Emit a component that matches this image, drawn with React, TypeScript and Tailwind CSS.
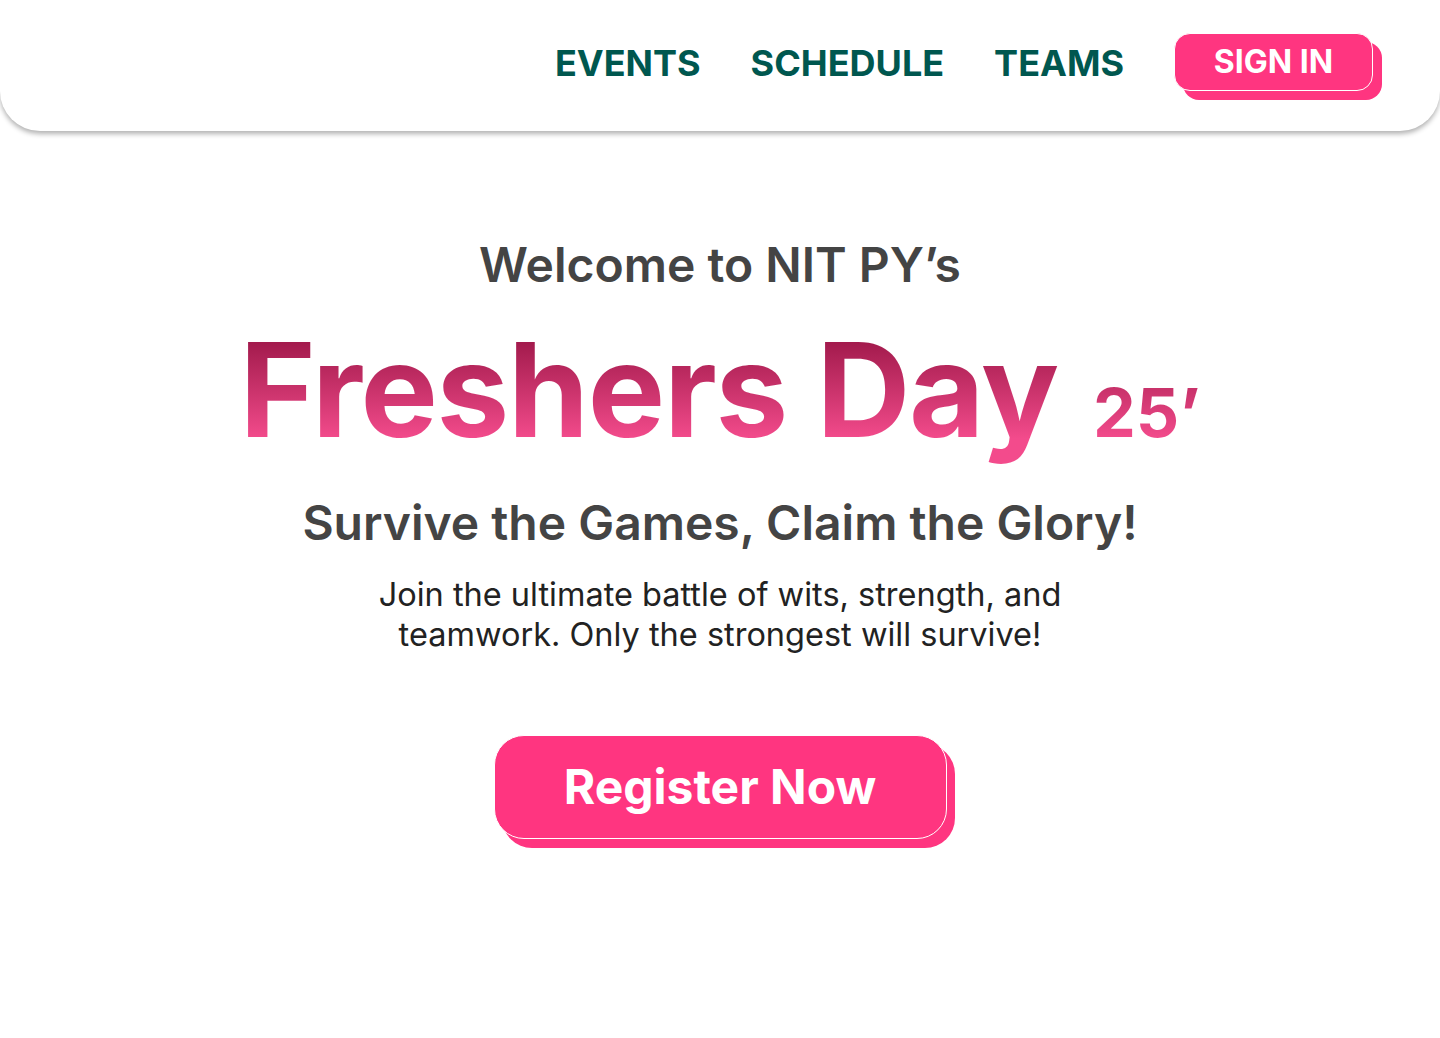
const NavLink = ({ label }: { label: string }) => (
  <a href="#" className="text-[36px] font-bold leading-none text-[#00574f]">
    {label}
  </a>
);

export default function App() {
  return (
    <div className="min-h-[1038px] bg-white font-['Inter',sans-serif]">
      <header className="flex h-[131px] items-center justify-end gap-[50px] rounded-b-[40px] bg-white pr-[67px] pb-[6px] shadow-[0_3px_5px_rgba(0,0,0,0.3)]">
        <NavLink label="EVENTS" />
        <NavLink label="SCHEDULE" />
        <NavLink label="TEAMS" />
        <button className="mb-[2px] flex h-[58px] w-[199px] items-center justify-center rounded-[16px] border border-white bg-[#ff3580] text-[32px] font-bold text-white shadow-[9px_9px_0_#ff3580]">
          SIGN IN
        </button>
      </header>

      <main className="flex flex-col items-center pt-[104px] text-center">
        <h2 className="text-[48px] font-semibold leading-[60px] text-[#444444]">
          Welcome to NIT PY’s
        </h2>
        {/* one gradient over both parts, clipped to the glyphs */}
        <h1 className="mt-[30px] flex items-baseline gap-[35px] bg-linear-to-b from-[#a31a4d] from-[11%] to-[#f34b8c] to-[72%] bg-clip-text font-bold leading-none text-transparent">
          <span className="pb-[28px] text-[130px] tracking-[-0.01em]">Freshers Day</span>
          <span className="text-[68px]">25’</span>
        </h1>
        <h3 className="mt-[10px] text-[48px] font-semibold leading-[60px] text-[#444444]">
          Survive the Games, Claim the Glory!
        </h3>
        <p className="mt-[22px] w-[730px] text-[32.5px] leading-[40px] text-[#222222]">
          Join the ultimate battle of wits, strength, and teamwork. Only the strongest will survive!
        </p>
        <button className="mt-[80px] flex h-[104px] w-[453px] items-center justify-center rounded-[30px] border border-white bg-[#ff3580] text-[48px] font-bold text-white shadow-[8px_9px_0_#ff3580]">
          Register Now
        </button>
      </main>
    </div>
  );
}
